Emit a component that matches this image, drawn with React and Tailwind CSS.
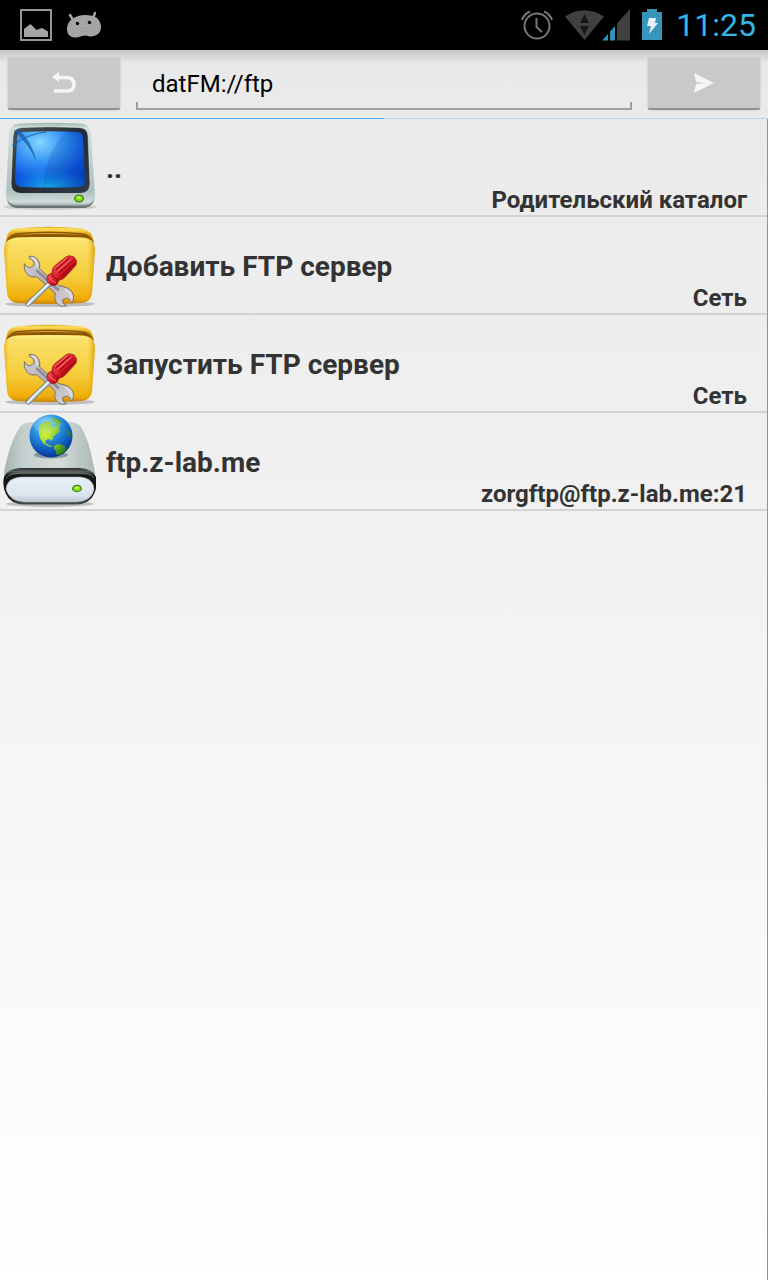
const entries = [
  { name: "..", info: "Родительский каталог", Icon: ComputerIcon },
  { name: "Добавить FTP сервер", info: "Сеть", Icon: ToolsFolderIcon },
  { name: "Запустить FTP сервер", info: "Сеть", Icon: ToolsFolderIcon },
  { name: "ftp.z-lab.me", info: "zorgftp@ftp.z-lab.me:21", Icon: NetDriveIcon },
];

function ComputerIcon() {
  return (
    <svg viewBox="0 0 96 96" className="size-24 shrink-0" aria-hidden="true">
      <defs>
        <linearGradient id="pc-case" x2="0" y2="1">
          <stop offset="0" stopColor="#9fb3b0" />
          <stop offset=".06" stopColor="#d2dfdd" />
          <stop offset=".8" stopColor="#adc0be" />
          <stop offset=".93" stopColor="#d0dcdb" />
          <stop offset="1" stopColor="#7b8a88" />
        </linearGradient>
        <linearGradient id="pc-frame" x2="1" y2="1">
          <stop offset="0" stopColor="#4d5458" />
          <stop offset=".5" stopColor="#252b30" />
          <stop offset="1" stopColor="#3b3f40" />
        </linearGradient>
        <radialGradient id="pc-screen" cx=".35" cy=".2" r=".85">
          <stop offset="0" stopColor="#86d8ff" />
          <stop offset=".4" stopColor="#3695f7" />
          <stop offset=".8" stopColor="#0b52dc" />
          <stop offset="1" stopColor="#0643c5" />
        </radialGradient>
        <radialGradient id="pc-glow" cx=".5" cy="1" r=".6">
          <stop offset="0" stopColor="#20c6fa" stopOpacity=".9" />
          <stop offset="1" stopColor="#169cf4" stopOpacity="0" />
        </radialGradient>
      </defs>
      <ellipse cx="50" cy="88" rx="47" ry="3" opacity=".13" />
      <path d="M20 4.500Q50 3 80 4.500Q90 5 91 15L95 77Q95 88 84 89H17Q6 88 6 77L9 15Q10 5 20 4.500Z" fill="url(#pc-case)" />
      <path d="M7 80Q10 86 18 86.500H83Q91 86 94 80Q93 88 84 89H17Q8 88 7 80Z" fill="#465452" opacity=".5" />
      <path
        d="M22 8.500Q50 7 79 8.500Q88 9 88 17L90 65Q90 74 80 74.500H21Q11 74 11 65L13 17Q13 9 22 8.500Z"
        fill="url(#pc-frame)"
        stroke="#e3eceb"
        strokeWidth=".6"
      />
      <path d="M22 13Q50 11.500 77 13Q83 14 83 19L85 62Q85 68 78 68Q50 69 22 68Q15 68 15 61L17 19Q17 13 22 13Z" fill="url(#pc-screen)" />
      <path d="M16 36H84L85 62Q85 68 78 68Q50 69 22 68Q15 68 15 61Z" fill="url(#pc-glow)" />
      <path d="M70 9Q45 31 42 74H80Q90 74 90 65L88 17Q87 9 70 9Z" fill="#002d7c" opacity=".15" />
      <path d="M14 12 18 10Q32 22 37 44Q29 25 14 12Z" fill="#165ba8" opacity=".75" />
      <path d="M13 28Q24 15 46 13Q27 16 13 25Z" fill="#1764b4" stroke="#1764b4" opacity=".7" />
      <ellipse cx="79" cy="79.500" rx="5" ry="4" fill="#3d7d1c" />
      <ellipse cx="79" cy="79.500" rx="3.700" ry="2.800" fill="#7be500" />
      <ellipse cx="79" cy="78.500" rx="2" ry="1" fill="#d2ff68" />
    </svg>
  );
}

function ToolsFolderIcon() {
  return (
    <svg viewBox="0 0 96 96" className="size-24 shrink-0" aria-hidden="true">
      <defs>
        <linearGradient id="folder-back" x2="0" y2="1">
          <stop offset="0" stopColor="#dba514" />
          <stop offset=".03" stopColor="#ffe060" />
          <stop offset=".1" stopColor="#e3aa10" />
          <stop offset="1" stopColor="#c58b08" />
        </linearGradient>
        <linearGradient id="folder-front" x2="0" y2="1">
          <stop offset="0" stopColor="#fff08f" />
          <stop offset=".06" stopColor="#fae069" />
          <stop offset=".6" stopColor="#f5cd3b" />
          <stop offset=".92" stopColor="#f0ac08" />
          <stop offset="1" stopColor="#c98503" />
        </linearGradient>
        <linearGradient id="folder-side">
          <stop offset="0" stopColor="#d08a00" stopOpacity=".5" />
          <stop offset=".06" stopColor="#e7a900" stopOpacity="0" />
          <stop offset=".92" stopColor="#e7a900" stopOpacity="0" />
          <stop offset="1" stopColor="#d08a00" stopOpacity=".7" />
        </linearGradient>
        <linearGradient id="wrench" x2="1" y2="1">
          <stop offset="0" stopColor="#d3d2d9" />
          <stop offset=".5" stopColor="#b5aeb5" />
          <stop offset="1" stopColor="#d9d8df" />
        </linearGradient>
        <linearGradient id="handle" x2="1" y2="1">
          <stop offset=".2" stopColor="#e0323a" />
          <stop offset=".45" stopColor="#e8303a" />
          <stop offset=".6" stopColor="#c00d1a" />
          <stop offset=".8" stopColor="#8e0410" />
        </linearGradient>
      </defs>
      <ellipse cx="50" cy="87" rx="45" ry="3" opacity=".2" />
      <path d="M6 26Q6 13 16 11.500Q48 8 82 11.500Q92 13 94 25L90 82H9Z" fill="url(#folder-back)" />
      <path d="M5 27Q8 18 16 16Q48 13 82 16Q91 17 94 26Q89 20 80 20H18Q9 21 5 27Z" fill="#8a5608" />
      <path d="M12 18Q48 14 86 18Q48 16 12 18Z" fill="#e3ac22" />
      <path d="M4 33Q4 22 15 21Q49 19 84 21Q95 22 95 33L92 76Q91 85 82 86Q50 88 17 86Q8 85 7 76Z" fill="url(#folder-front)" />
      <path d="M4 33Q4 22 15 21Q49 19 84 21Q95 22 95 33L92 76Q91 85 82 86Q50 88 17 86Q8 85 7 76Z" fill="url(#folder-side)" />
      <g transform="translate(0 -2) scale(.333)" strokeLinejoin="round">
        <path
          d="M88 124Q106 122 116 138Q121 149 119 162L176 212Q190 214 204 220Q222 231 221 248Q220 258 216 265Q211 253 202 249L188 254Q185 266 199 272Q181 279 169 263Q161 251 166 235L110 185Q93 190 80 176Q70 163 73 146Q78 157 89 159L102 151Q104 136 88 130Z"
          fill="url(#wrench)"
          stroke="#77706c"
          strokeWidth="3"
        />
        <path d="m112 168 62 56" stroke="#918a94" strokeWidth="8" strokeLinecap="round" />
        <path d="M96 128Q112 134 112 157M194 222Q213 232 215 248" fill="none" stroke="#f3f2f5" strokeWidth="3" />
        <path d="m146 199 10 9-44 42q-8 11-28 25l-7-7q10-17 23-24Z" fill="#a9bac4" stroke="#5c6467" strokeWidth="2" />
        <path d="m149 204-45 43-22 24" fill="none" stroke="#f0fbff" strokeWidth="5" />
        <path
          d="M144 181Q151 175 156 175Q156 160 165 152L199 125Q208 119 222 126Q234 136 228 151L194 188Q187 195 177 196Q175 205 168 210Q155 216 145 204Q137 193 144 181Z"
          fill="url(#handle)"
          stroke="#931019"
          strokeWidth="2"
        />
        <path d="m169 164 39-34M178 173l40-36M185 182l38-36" stroke="#a70b17" strokeWidth="4" strokeLinecap="round" />
        <path d="m165 160 37-32M173 168l39-34M147 185q6 14 20 19" fill="none" stroke="#f4777b" strokeWidth="3" strokeLinecap="round" />
        <path d="M156 176Q161 191 177 196" fill="none" stroke="#850813" strokeWidth="3" />
      </g>
    </svg>
  );
}

function NetDriveIcon() {
  return (
    <svg viewBox="0 0 96 96" className="size-24 shrink-0" aria-hidden="true">
      <defs>
        <linearGradient id="drive-top">
          <stop offset="0" stopColor="#a3b3b1" />
          <stop offset=".2" stopColor="#c3cfce" />
          <stop offset=".6" stopColor="#d3dcdb" />
          <stop offset="1" stopColor="#a9b8b6" />
        </linearGradient>
        <linearGradient id="drive-front" x2="0" y2="1">
          <stop offset="0" stopColor="#e9eef5" />
          <stop offset=".7" stopColor="#dde5ee" />
          <stop offset="1" stopColor="#bcc8d1" />
        </linearGradient>
        <linearGradient id="drive-band" x2="0" y2="1">
          <stop offset="0" stopColor="#2b2f2f" />
          <stop offset=".1" stopColor="#5c6060" />
          <stop offset=".2" stopColor="#151717" />
          <stop offset=".8" stopColor="#151717" />
          <stop offset="1" stopColor="#4b5050" />
        </linearGradient>
        <radialGradient id="globe" cx=".4" cy=".25" r=".8">
          <stop offset="0" stopColor="#7bd6f5" />
          <stop offset=".4" stopColor="#2b93e0" />
          <stop offset=".75" stopColor="#0c55bb" />
          <stop offset="1" stopColor="#062d85" />
        </radialGradient>
        <radialGradient id="land" gradientUnits="userSpaceOnUse" cx="45" cy="22" r="27">
          <stop offset="0" stopColor="#cdf03c" />
          <stop offset=".5" stopColor="#83c92f" />
          <stop offset="1" stopColor="#1f7011" />
        </radialGradient>
      </defs>
      <ellipse cx="50" cy="91" rx="44" ry="3" opacity=".2" />
      <path d="M20 14Q24 9 34 9H68Q77 9 81 14Q89 27 93 50Q96 60 95 68H5Q3 60 6 50Q11 27 20 14Z" fill="url(#drive-top)" />
      <path d="M4 64Q7 56 20 55H80Q93 56 96 64Q98 73 94 81Q90 91 76 91.500H24Q10 91 6 81Q2 73 4 64Z" fill="url(#drive-band)" />
      <path d="M6 65Q10 60 22 60H79Q91 60 94 65" fill="none" stroke="#8b9393" strokeWidth=".7" />
      <path d="M21 64H80Q93 65 94 76Q92 88 77 89H24Q9 88 6 76Q7 65 21 64Z" fill="url(#drive-front)" stroke="#aab5b8" strokeWidth=".6" />
      <ellipse cx="77" cy="75.500" rx="5" ry="3.700" fill="#3d7d1c" />
      <ellipse cx="77" cy="75.500" rx="3.700" ry="2.500" fill="#81e700" />
      <ellipse cx="77" cy="74.700" rx="2" ry="1" fill="#d8ff68" />
      <ellipse cx="51" cy="42" rx="17" ry="3.500" fill="#445b65" opacity=".5" />
      <circle cx="51" cy="23" r="21.500" fill="url(#globe)" />
      <g fill="url(#land)">
        <path d="M39 14Q42 9 48 8L52 9 50 12 54 14 57 12 60 16 60 19 56 21 53 24 52 28 49 26 46 27 45 30 49 32 53 34 50 34 44 31 41 27 39 22Z" />
        <path d="m54 33 4-2 5 1 4 3Q65 40 59 42L56 41Q57 37 54 36Z" />
        <path d="M51 5Q57 5 61 8L60 12 57 13 54 9Z" />
        <path d="M66 15Q71 19 71 25L68 22Z" />
      </g>
      <ellipse cx="47" cy="12" rx="14" ry="8" fill="#fff" opacity=".16" />
    </svg>
  );
}

function StatusBar() {
  return (
    <header className="flex h-[50px] items-center justify-between bg-black pr-3 pl-5">
      <div className="flex items-center gap-[14px]">
        <svg viewBox="0 0 32 32" className="size-8" aria-hidden="true">
          <path d="M1 1H31V31H1Z" fill="none" stroke="#969696" strokeWidth="2" />
          <path d="M4 28V20L10.500 15L16.500 21L22 19L28 22.500V28Z" fill="#a5a5a5" />
        </svg>
        <svg viewBox="0 0 36 30" className="h-[30px] w-9" aria-hidden="true">
          <path d="M4 5 7 10M29 3 27 8" stroke="#a5a5a5" strokeWidth="2.500" strokeLinecap="round" />
          <path d="M6 9Q12 5 19 5Q27 5 31 8Q35 12 35 17Q35 24 28 26Q24 27 20 25.500Q16 25.500 13 27Q8 28.500 4 26Q1 24 1 19Q1 13 6 9Z" fill="#a5a5a5" />
          <path d="M15.500 18.500h1M20 18h1M15.500 21.500h1" stroke="#808080" />
          <circle cx="11.500" cy="13.500" r="1.700" />
          <circle cx="23.500" cy="12.500" r="1.700" />
        </svg>
      </div>
      <div className="flex items-center">
        <svg viewBox="0 0 32 32" className="mr-3 size-8" fill="none" stroke="#767676" aria-hidden="true">
          <circle cx="16" cy="17" r="12.500" strokeWidth="2" />
          <path d="M15.500 9V18L21 23M1 11Q3 5 9 2.500M23 2.500Q29 5 31 11" strokeWidth="2" />
        </svg>
        <svg viewBox="0 0 65 32" className="mr-3 h-8 w-[65px]" aria-hidden="true">
          <path d="M0 7.500Q19-5 39 7.500L19.500 31Z" fill="#404040" />
          <path d="m15 14 4.500-9 4.500 9ZM15 17h9l-4.500 9Z" fill="#171717" />
          <path d="M65 0V31.500H52V14.500Z" fill="#404040" />
          <path d="m37 31.500 6-6.500v6.500ZM45 22.500l5-5.500v14.500h-5Z" fill="#2d91bc" />
        </svg>
        <svg viewBox="0 0 20 32" className="mr-[14px] h-8 w-5" aria-hidden="true">
          <path d="M5 0h10v3h5v28H0V3h5Z" fill="#3795bb" />
          <path d="M7 9h7l-1 5h3L7 25l2-8H5Z" fill="#e4f2f7" />
        </svg>
        <time className="font-['Roboto',sans-serif] text-[32px] leading-8 text-[#33b5e5]">11:25</time>
      </div>
    </header>
  );
}

function ToolButton({ label, children }) {
  return (
    <button
      type="button"
      aria-label={label}
      className="flex h-[52px] w-28 items-center justify-center rounded-xs border-b-2 border-[#929292] bg-[#c9c9c9] shadow-[0_0_2px_#aaaaaa]"
    >
      {children}
    </button>
  );
}

function AddressBar() {
  return (
    <form className="flex h-[68px] items-center gap-4 bg-linear-to-b from-black/15 to-transparent to-20% px-2">
      <ToolButton label="Назад">
        <svg viewBox="0 0 24 22" className="h-[22px] w-6" fill="none" aria-hidden="true">
          <path d="M6 5.500H14.500Q22 5.500 22 12.500Q22 19 14.500 19H2" stroke="#f5f5f5" strokeWidth="3.500" />
          <path d="M0 5 7 0V10Z" fill="#f5f5f5" />
        </svg>
      </ToolButton>
      <div className="min-w-0 flex-1 self-end pb-2">
        <input
          type="text"
          aria-label="Путь"
          defaultValue="datFM://ftp"
          className="block h-9 w-full bg-transparent px-4 font-['Roboto',sans-serif] text-2xl text-black outline-none"
        />
        <div className="h-2 border-x-2 border-b-2 border-[#a0a0a0]" />
      </div>
      <ToolButton label="Перейти">
        <svg viewBox="0 0 22 22" className="size-[22px]" aria-hidden="true">
          <path d="M1 1 21 11 1 21 3 12 13 11 3 10Z" fill="#f5f5f5" />
        </svg>
      </ToolButton>
    </form>
  );
}

function FileRow({ name, info, Icon }) {
  return (
    <li className="border-b-2 border-[#d3d3d3]">
      <a href="#" className="flex h-24 items-start gap-[10px] pr-5 text-[#333333]">
        <Icon />
        <span className="flex h-full min-w-0 flex-1 flex-col pt-8">
          <span className="text-[28px] leading-9 font-bold">{name}</span>
          <span className="text-right text-2xl leading-[26px] font-bold">{info}</span>
        </span>
      </a>
    </li>
  );
}

function App() {
  return (
    <div className="flex min-h-screen flex-col bg-linear-to-b from-[#e8e8e8] to-white font-['Roboto',sans-serif]">
      <StatusBar />
      <AddressBar />
      <div className="h-px bg-[#b5d9f2]">
        <div className="h-px w-1/2 bg-[#4db2f4]" />
      </div>
      <main className="flex-1 border-r border-[#4fa6df]">
        <ul>
          {entries.map((entry) => (
            <FileRow key={entry.name} {...entry} />
          ))}
        </ul>
      </main>
    </div>
  );
}

export default App;
